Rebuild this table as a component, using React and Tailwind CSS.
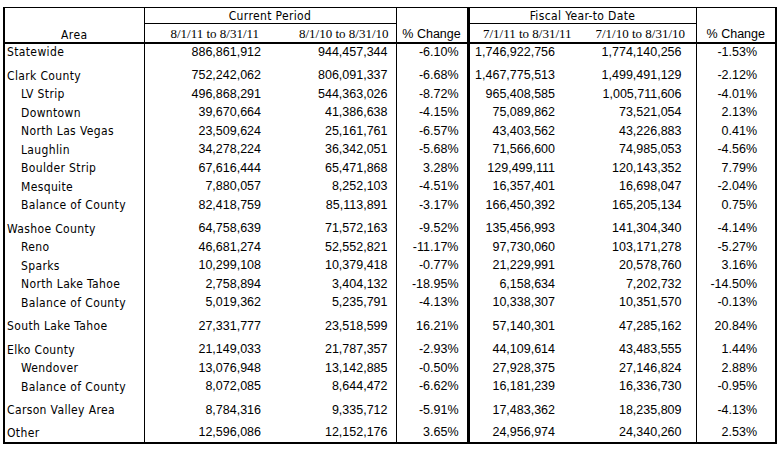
const rows = [
  { label: 'Statewide', a: '886,861,912', b: '944,457,344', p: '-6.10%', c: '1,746,922,756', d: '1,774,140,256', q: '-1.53%' },
  { label: 'Clark County', a: '752,242,062', b: '806,091,337', p: '-6.68%', c: '1,467,775,513', d: '1,499,491,129', q: '-2.12%', group: true },
  { label: 'LV Strip', a: '496,868,291', b: '544,363,026', p: '-8.72%', c: '965,408,585', d: '1,005,711,606', q: '-4.01%', sub: true },
  { label: 'Downtown', a: '39,670,664', b: '41,386,638', p: '-4.15%', c: '75,089,862', d: '73,521,054', q: '2.13%', sub: true },
  { label: 'North Las Vegas', a: '23,509,624', b: '25,161,761', p: '-6.57%', c: '43,403,562', d: '43,226,883', q: '0.41%', sub: true },
  { label: 'Laughlin', a: '34,278,224', b: '36,342,051', p: '-5.68%', c: '71,566,600', d: '74,985,053', q: '-4.56%', sub: true },
  { label: 'Boulder Strip', a: '67,616,444', b: '65,471,868', p: '3.28%', c: '129,499,111', d: '120,143,352', q: '7.79%', sub: true },
  { label: 'Mesquite', a: '7,880,057', b: '8,252,103', p: '-4.51%', c: '16,357,401', d: '16,698,047', q: '-2.04%', sub: true },
  { label: 'Balance of County', a: '82,418,759', b: '85,113,891', p: '-3.17%', c: '166,450,392', d: '165,205,134', q: '0.75%', sub: true },
  { label: 'Washoe County', a: '64,758,639', b: '71,572,163', p: '-9.52%', c: '135,456,993', d: '141,304,340', q: '-4.14%', group: true },
  { label: 'Reno', a: '46,681,274', b: '52,552,821', p: '-11.17%', c: '97,730,060', d: '103,171,278', q: '-5.27%', sub: true },
  { label: 'Sparks', a: '10,299,108', b: '10,379,418', p: '-0.77%', c: '21,229,991', d: '20,578,760', q: '3.16%', sub: true },
  { label: 'North Lake Tahoe', a: '2,758,894', b: '3,404,132', p: '-18.95%', c: '6,158,634', d: '7,202,732', q: '-14.50%', sub: true },
  { label: 'Balance of County', a: '5,019,362', b: '5,235,791', p: '-4.13%', c: '10,338,307', d: '10,351,570', q: '-0.13%', sub: true },
  { label: 'South Lake Tahoe', a: '27,331,777', b: '23,518,599', p: '16.21%', c: '57,140,301', d: '47,285,162', q: '20.84%', group: true },
  { label: 'Elko County', a: '21,149,033', b: '21,787,357', p: '-2.93%', c: '44,109,614', d: '43,483,555', q: '1.44%', group: true },
  { label: 'Wendover', a: '13,076,948', b: '13,142,885', p: '-0.50%', c: '27,928,375', d: '27,146,824', q: '2.88%', sub: true },
  { label: 'Balance of County', a: '8,072,085', b: '8,644,472', p: '-6.62%', c: '16,181,239', d: '16,336,730', q: '-0.95%', sub: true },
  { label: 'Carson Valley Area', a: '8,784,316', b: '9,335,712', p: '-5.91%', c: '17,483,362', d: '18,235,809', q: '-4.13%', group: true },
  { label: 'Other', a: '12,596,086', b: '12,152,176', p: '3.65%', c: '24,956,974', d: '24,340,260', q: '2.53%', group: true },
];

// condensed face with a little tracking, close to the Helvetica Narrow of the original
const narrow = "font-['Liberation_Sans_Narrow','Arial_Narrow','DejaVu_Sans_Condensed',sans-serif] text-[12px] tracking-[0.03em]";
const num = "font-['Liberation_Sans',Arial,sans-serif]";
const serif = "font-['Liberation_Serif','Times_New_Roman',serif] text-[13px]";

export default function App() {
  return (
    <div className="w-[779px] h-[449px] bg-white pl-[3px] pt-[7px] text-black">
      <table className="table-fixed border-collapse w-[772px] text-[12.5px] leading-none border-l-2 border-r-2 border-b-2 border-t border-black">
        <colgroup>
          <col className="w-[140px]" />
          <col className="w-[135px]" />
          <col className="w-[117px]" />
          <col className="w-[72px]" />
          <col className="w-[117px]" />
          <col className="w-[111px]" />
          <col className="w-[80px]" />
        </colgroup>
        <thead>
          <tr className="h-[16px]">
            <td rowSpan={2} className={`border-r border-b-2 border-black text-center align-bottom pb-[1px] ${narrow}`}>Area</td>
            <td colSpan={2} className={`border-r border-b border-black text-center align-middle ${narrow}`}>Current Period</td>
            <td rowSpan={2} className={`border-r-[3px] border-b-2 border-black text-center align-bottom pb-[1px] ${num}`}>% Change</td>
            <td colSpan={2} className={`border-r border-b border-black text-center align-middle ${narrow}`}>Fiscal Year-to Date</td>
            <td rowSpan={2} className={`border-b-2 border-black text-center align-bottom pb-[1px] ${num}`}>% Change</td>
          </tr>
          <tr className="h-[19px]">
            <td className={`border-b-2 border-black text-center align-bottom pb-[2px] pl-[6px] ${serif}`}>8/1/11 to 8/31/11</td>
            <td className={`border-r border-b-2 border-black text-right align-bottom pb-[2px] pr-[7px] ${serif}`}>8/1/10 to 8/31/10</td>
            <td className={`border-b-2 border-black text-center align-bottom pb-[2px] ${serif}`}>7/1/11 to 8/31/11</td>
            <td className={`border-r border-b-2 border-black text-center align-bottom pb-[2px] ${serif}`}>7/1/10 to 8/31/10</td>
          </tr>
        </thead>
        <tbody>
          {rows.map((r, i) => {
            const h = r.group ? 'h-[23.5px]' : 'h-[18.5px]';
            const cell = `${h} align-bottom pb-[3px]`;
            return (
              <tr key={i}>
                <td className={`${cell} border-r border-black whitespace-nowrap ${r.sub ? 'pl-[16px]' : 'pl-[2px]'} ${narrow}`}>{r.label}</td>
                <td className={`${cell} text-right pr-[18px] ${num}`}>{r.a}</td>
                <td className={`${cell} text-right pr-[8px] border-r border-black ${num}`}>{r.b}</td>
                <td className={`${cell} text-right pr-[8px] border-r-[3px] border-black ${num}`}>{r.p}</td>
                <td className={`${cell} text-right pr-[30px] ${num}`}>{r.c}</td>
                <td className={`${cell} text-right pr-[14px] border-r border-black ${num}`}>{r.d}</td>
                <td className={`${cell} text-right pr-[18px] ${num}`}>{r.q}</td>
              </tr>
            );
          })}
        </tbody>
      </table>
    </div>
  );
}
